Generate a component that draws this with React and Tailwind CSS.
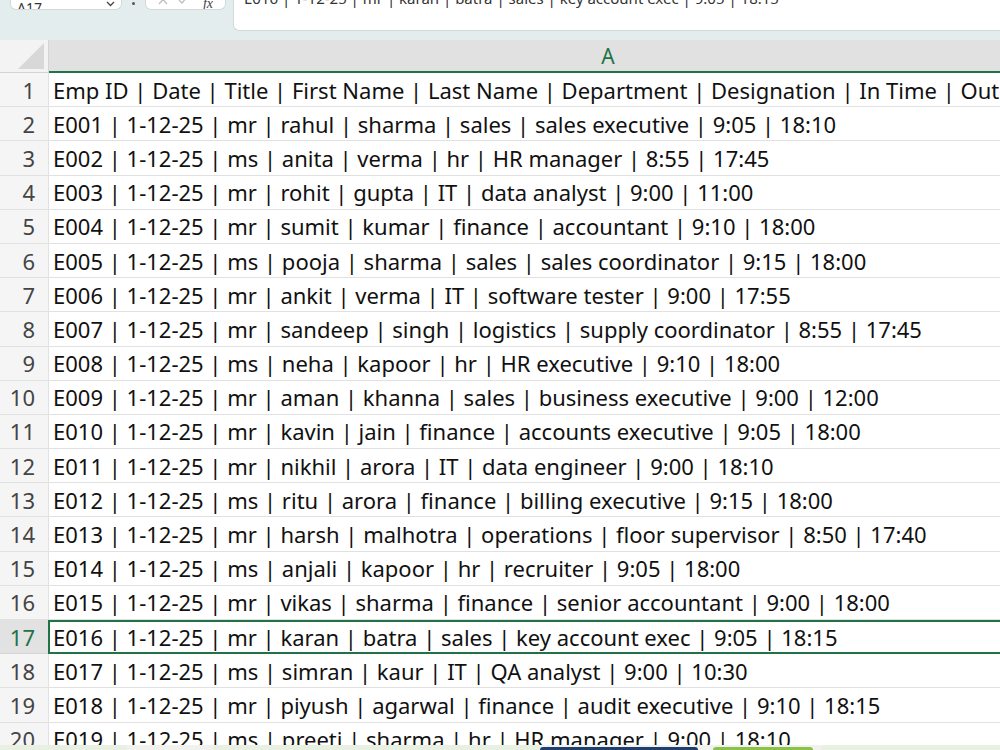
import React from 'react';

const rows = [
  'Emp ID | Date | Title | First Name | Last Name | Department | Designation | In Time | Out Time',
  'E001 | 1-12-25 | mr | rahul | sharma | sales | sales executive | 9:05 | 18:10',
  'E002 | 1-12-25 | ms | anita | verma | hr | HR manager | 8:55 | 17:45',
  'E003 | 1-12-25 | mr | rohit | gupta | IT | data analyst | 9:00 | 11:00',
  'E004 | 1-12-25 | mr | sumit | kumar | finance | accountant | 9:10 | 18:00',
  'E005 | 1-12-25 | ms | pooja | sharma | sales | sales coordinator | 9:15 | 18:00',
  'E006 | 1-12-25 | mr | ankit | verma | IT | software tester | 9:00 | 17:55',
  'E007 | 1-12-25 | mr | sandeep | singh | logistics | supply coordinator | 8:55 | 17:45',
  'E008 | 1-12-25 | ms | neha | kapoor | hr | HR executive | 9:10 | 18:00',
  'E009 | 1-12-25 | mr | aman | khanna | sales | business executive | 9:00 | 12:00',
  'E010 | 1-12-25 | mr | kavin | jain | finance | accounts executive | 9:05 | 18:00',
  'E011 | 1-12-25 | mr | nikhil | arora | IT | data engineer | 9:00 | 18:10',
  'E012 | 1-12-25 | ms | ritu | arora | finance | billing executive | 9:15 | 18:00',
  'E013 | 1-12-25 | mr | harsh | malhotra | operations | floor supervisor | 8:50 | 17:40',
  'E014 | 1-12-25 | ms | anjali | kapoor | hr | recruiter | 9:05 | 18:00',
  'E015 | 1-12-25 | mr | vikas | sharma | finance | senior accountant | 9:00 | 18:00',
  'E016 | 1-12-25 | mr | karan | batra | sales | key account exec | 9:05 | 18:15',
  'E017 | 1-12-25 | ms | simran | kaur | IT | QA analyst | 9:00 | 10:30',
  'E018 | 1-12-25 | mr | piyush | agarwal | finance | audit executive | 9:10 | 18:15',
  'E019 | 1-12-25 | ms | preeti | sharma | hr | HR manager | 9:00 | 18:10',
];

const font = { fontFamily: '"Noto Sans", "Open Sans", sans-serif' };

export default function App() {
  const active = 17;

  return (
    <div className="w-[1000px] h-[750px] overflow-hidden bg-white relative" style={font}>
      {/* formula bar strip */}
      <div className="h-[40px] bg-[#e4eded] flex items-start relative">
        <div className="ml-[10px] w-[112px] h-[10px] bg-white rounded-b-[6px] border border-t-0 border-[#d3d9da] flex items-end justify-between px-[6px] overflow-hidden">
          <span className="text-[14px] leading-none text-[#333] -mb-[6px]">A17</span>
          <svg width="9" height="6" viewBox="0 0 9 6" className="mb-[2px]"><path d="M1 1l3.5 3.5L8 1" fill="none" stroke="#444" strokeWidth="1.3" /></svg>
        </div>
        <div className="ml-[10px] mt-[2px] w-[3px] h-[3px] rounded-full bg-[#555]" />
        <div className="ml-[10px] w-[81px] h-[10px] bg-white rounded-b-[6px] border border-t-0 border-[#d3d9da] flex items-end px-[12px] gap-[10px] overflow-hidden">
          <svg width="10" height="6" viewBox="0 0 10 6" className="mb-[4px]"><path d="M1 -4l8 9M9 -4l-8 9" fill="none" stroke="#bbb" strokeWidth="1.2" /></svg>
          <svg width="10" height="6" viewBox="0 0 10 6" className="mb-[4px]"><path d="M1 1l3 3 5-6" fill="none" stroke="#bbb" strokeWidth="1.2" /></svg>
          <span className="ml-auto text-[14px] italic leading-none text-[#444] -mb-[2px]" style={{ fontFamily: '"Liberation Serif", serif' }}>fx</span>
        </div>
        <div className="ml-[7px] flex-1 h-[31px] bg-white rounded-bl-[6px] border border-t-0 border-r-0 border-[#d3d9da] overflow-hidden">
          <div className="text-[15px] leading-none text-[#333] pl-[10px] -mt-[9px]">{rows[active - 1]}</div>
        </div>
      </div>

      {/* column header */}
      <div className="flex h-[33px]">
        <div className="w-[49px] shrink-0 bg-[#f3f3f3] border-r border-[#d4d4d4] border-b border-b-[#d4d4d4] relative">
          <svg width="26" height="26" viewBox="0 0 26 26" className="absolute right-[4px] bottom-[3px]"><path d="M26 0V26H0Z" fill="#d8d8d8" /></svg>
        </div>
        <div className="flex-1 bg-[#e1e1e1] border-b-2 border-[#217346] flex items-center justify-center">
          <span className="text-[21px] text-[#217346] leading-none pl-[167px] -mb-[2px]">A</span>
        </div>
      </div>

      {/* rows */}
      <div className="flex flex-col">
        {rows.map((r, i) => {
          const n = i + 1;
          const sel = n === active;
          return (
            <div key={n} className="flex h-[34.2px] shrink-0">
              <div className={`w-[49px] shrink-0 border-r border-b flex items-center justify-end pr-[13px] text-[22px] leading-none ${sel ? 'bg-[#e2e2e2] text-[#217346] border-[#d4d4d4]' : 'bg-[#f5f5f5] text-[#444] border-[#e1e1e1]'}`}>
                {n}
              </div>
              <div className={`flex-1 whitespace-nowrap overflow-hidden flex items-center text-[22px] leading-none text-[#111] ${sel ? 'border-2 border-r-0 border-[#217346] -ml-[1px] pl-[3px]' : 'border-b border-[#e1e1e1] pl-[4px]'}`}>
                {r}
              </div>
            </div>
          );
        })}
      </div>

      {/* sheet tab strip */}
      <div className="absolute left-0 right-0 bottom-0 h-[5px] bg-[#f1f2ee] flex items-end">
        <div className="w-[127px] h-[5px] bg-[#e8f0e2] rounded-tr-[4px]" />
        <div className="ml-[86px] w-[327px] h-[5px] bg-[#e8f0e2] rounded-t-[4px]" />
        <div className="w-[158px] h-[3px] bg-[#1f3f6e] rounded-t-[3px]" />
        <div className="ml-[15px] w-[100px] h-[3px] bg-[#8bc34a] rounded-t-[3px]" />
        <div className="ml-[8px] flex-1 h-[5px] bg-[#e8f0e2] rounded-tl-[4px]" />
      </div>
    </div>
  );
}
